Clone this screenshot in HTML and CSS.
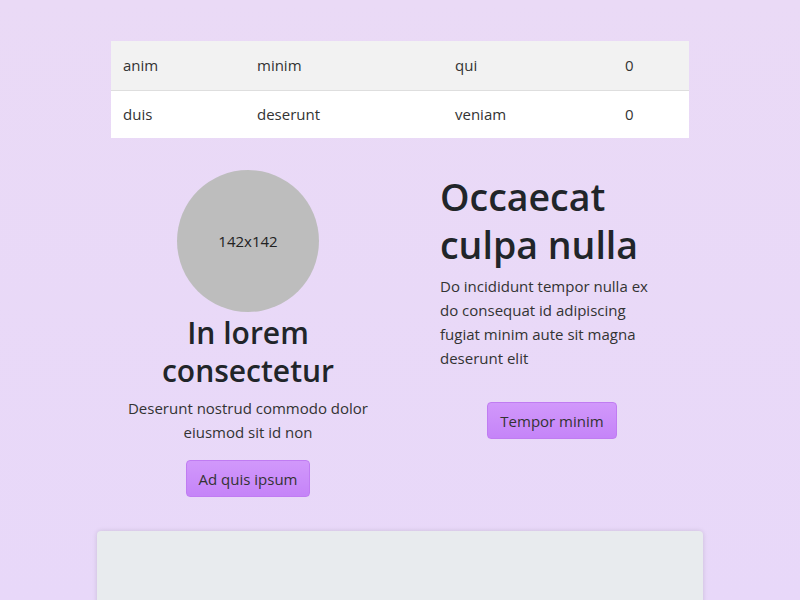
FILE: index.html
```html
<!DOCTYPE html>
<html>
<head>
<meta charset="utf-8">
<link rel="stylesheet" href="styles.css">
</head>
<body>
<div class="page">
  <table class="data">
    <tr class="odd"><td class="c1">anim</td><td class="c2">minim</td><td class="c3">qui</td><td class="c4">0</td></tr>
    <tr><td>duis</td><td>deserunt</td><td>veniam</td><td>0</td></tr>
  </table>
  <div class="cols">
    <div class="col left">
      <div class="avatar">142x142</div>
      <h2 class="title-sm">In lorem consectetur</h2>
      <p class="text">Deserunt nostrud commodo dolor eiusmod sit id non</p>
      <button class="btn">Ad quis ipsum</button>
    </div>
    <div class="col right">
      <h1 class="title-lg">Occaecat culpa nulla</h1>
      <p class="text">Do incididunt tempor nulla ex do consequat id adipiscing fugiat minim aute sit magna deserunt elit</p>
      <div class="btn-wrap"><button class="btn">Tempor minim</button></div>
    </div>
  </div>
  <div class="card"></div>
</div>
</body>
</html>
```
FILE: styles.css
```css
html, body {
  margin: 0;
  padding: 0;
  height: 100%;
}
body {
  background: linear-gradient(180deg, #eadaf6 0%, #e8d8f9 100%);
  font-family: "Open Sans", "Noto Sans", sans-serif;
  color: #333;
  overflow: hidden;
}
.page {
  width: 606px;
  margin: 0 auto;
  padding-top: 41px;
  display: flex;
  flex-direction: column;
  align-items: center;
}
.data {
  width: 578px;
  border-collapse: collapse;
  font-size: 15px;
  color: #333;
  background: #fff;
}
.data td {
  height: 48px;
  padding: 0 12px;
  box-sizing: border-box;
}
.data tr.odd td {
  height: 49px;
  background: #f2f2f2;
  border-bottom: 1px solid #dedede;
}
.c1 { width: 134px; }
.c2 { width: 198px; }
.c3 { width: 170px; }
.c4 { width: 76px; }
.cols {
  width: 578px;
  display: grid;
  grid-template-columns: 274px 274px;
  column-gap: 30px;
  margin-top: 32px;
}
.col {
  display: flex;
  flex-direction: column;
}
.left {
  align-items: center;
  text-align: center;
}
.avatar {
  width: 142px;
  height: 142px;
  border-radius: 50%;
  background: #bdbdbd;
  display: flex;
  align-items: center;
  justify-content: center;
  font-size: 15px;
  color: #222;
}
.title-sm {
  margin: 2px 0 0;
  font-size: 30px;
  line-height: 38px;
  font-weight: 600;
  color: #212529;
}
.title-lg {
  margin: 3px 0 0;
  font-size: 37.5px;
  line-height: 48px;
  font-weight: 600;
  color: #212529;
}
.text {
  margin: 6px 0 0;
  font-size: 15px;
  line-height: 24px;
  color: #333;
}
.right {
  padding: 0 25px;
}
.right .text {
  margin-top: 5px;
}
.btn-wrap {
  display: flex;
  justify-content: center;
  margin-top: 32px;
}
.left .btn {
  margin-top: 16px;
}
.btn {
  font-family: inherit;
  font-size: 15px;
  color: #333;
  background: linear-gradient(180deg, #d198fb 0%, #c584f8 100%);
  border: 1px solid #c07cf2;
  border-radius: 4px;
  height: 37px;
  padding: 0 12px;
}
.card {
  width: 606px;
  height: 120px;
  margin-top: 34px;
  background: #e8ebee;
  border-radius: 4px;
  box-shadow: 0 0 5px rgba(0,0,0,0.13);
}
```
